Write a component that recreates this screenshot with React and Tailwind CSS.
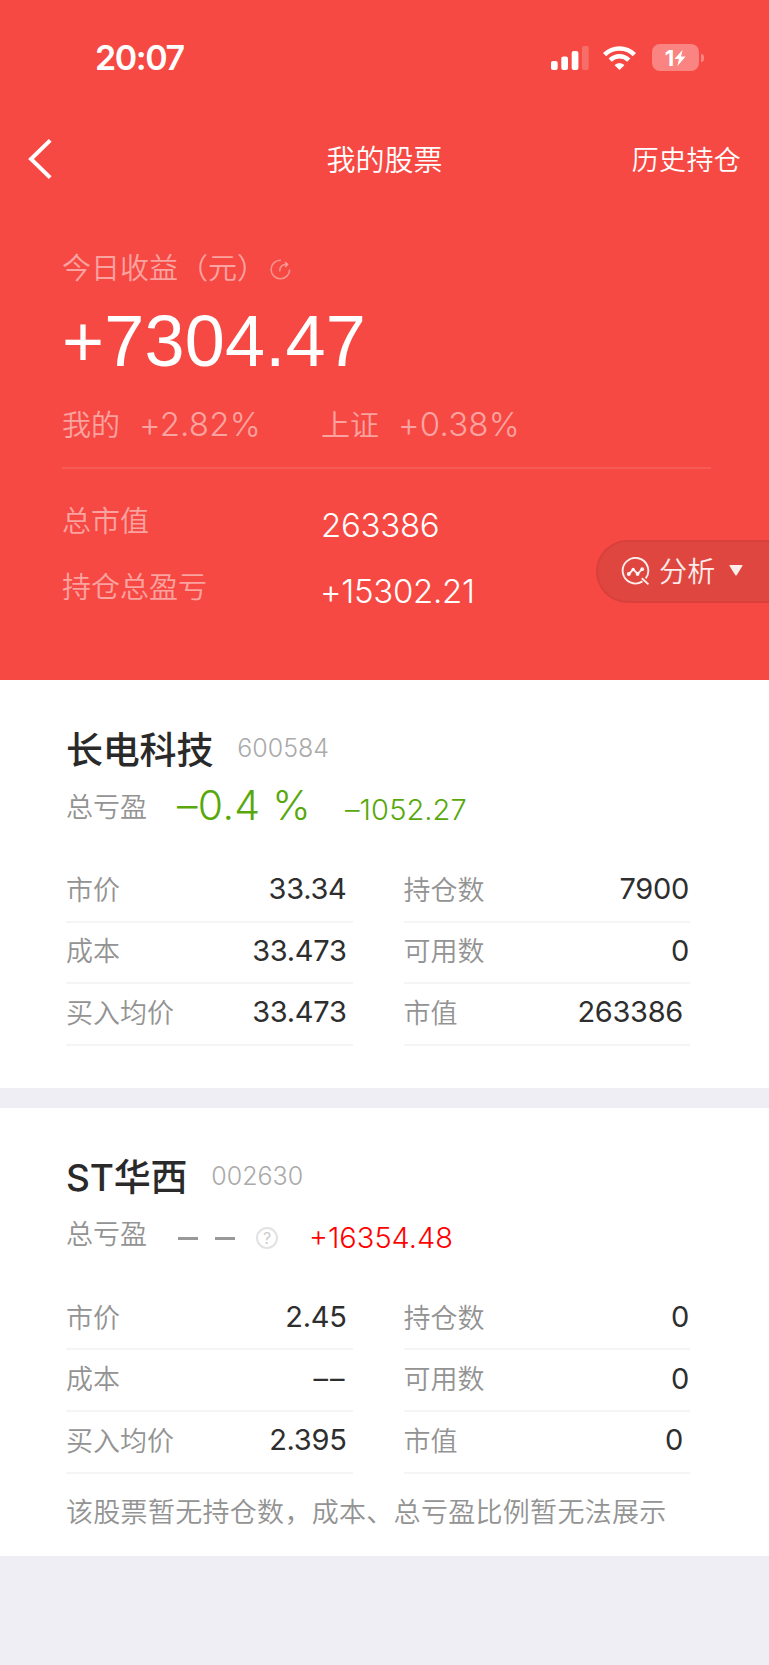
import React from "react";

const stocks = [
  {
    name: "长电科技",
    code: "600584",
    percent: "–0.4 %",
    profit: "–1052.27",
    left: [
      ["市价", "33.34"],
      ["成本", "33.473"],
      ["买入均价", "33.473"],
    ],
    right: [
      ["持仓数", "7900"],
      ["可用数", "0"],
      ["市值", "263386"],
    ],
  },
  {
    name: "ST华西",
    code: "002630",
    percent: null,
    profit: "+16354.48",
    left: [
      ["市价", "2.45"],
      ["成本", "––"],
      ["买入均价", "2.395"],
    ],
    right: [
      ["持仓数", "0"],
      ["可用数", "0"],
      ["市值", "0"],
    ],
    note: "该股票暂无持仓数，成本、总亏盈比例暂无法展示",
  },
];

const StatusBar = () => (
  <div className="flex h-[115px] items-center pl-[95px] pr-[65px]">
    <span className="text-[34px] font-semibold tracking-[-1.4px]">20:07</span>
    <div className="ml-auto flex items-center">
      <svg width="38" height="24" viewBox="0 0 38 24" fill="#fff">
        <rect x="0" y="15" width="6.7" height="9" rx="2" />
        <rect x="10.3" y="10.5" width="6.7" height="13.5" rx="2" />
        <rect x="20.7" y="5" width="6.7" height="19" rx="2" />
        <rect x="31" y="0" width="6.7" height="24" rx="2" opacity="0.2" />
      </svg>
      <svg className="ml-[14px]" width="33" height="24" viewBox="0 0 33 24" fill="none" stroke="#fff">
        <path d="M1.6 8.6 C10 0.4 23 0.4 31.4 8.6" strokeWidth="4.6" />
        <path d="M7.2 14.2 C12.6 9 20.4 9 25.8 14.2" strokeWidth="4.6" />
        <path d="M16.5 24 L11.6 19.2 C14.3 16.6 18.7 16.6 21.4 19.2 Z" fill="#fff" stroke="none" />
      </svg>
      <div className="ml-[16px] flex h-[27px] w-[47px] items-center justify-center rounded-[8px] bg-[#fa8481]">
        <span className="text-[22px] leading-none font-bold">1</span>
        <svg width="12" height="16" viewBox="0 0 12 16" fill="#fff">
          <path d="M8.6 0 L0.4 9 H5 L3.4 16 L11.6 6.6 H7 Z" />
        </svg>
      </div>
      <div className="ml-[2px] h-[8px] w-[3px] rounded-r-full bg-[#fa8481]" />
    </div>
  </div>
);

const NavBar = () => (
  <div className="grid h-[89px] grid-cols-3 items-center pl-[28px] pr-[28px] font-[350]">
    <svg className="mb-px" width="24" height="40" viewBox="0 0 24 40" fill="none" stroke="#fff" strokeWidth="4">
      <path d="M22.2 1.4 L3 20 L22.2 38.6" />
    </svg>
    <h1 className="pt-px text-center text-[29px] leading-none">我的股票</h1>
    <span className="pt-px text-right text-[27px] leading-none tracking-[0.3px]">历史持仓</span>
  </div>
);

const Summary = () => (
  <div className="pl-[62px] pr-[58px] font-[350]">
    <div className="mt-[49px] flex h-[30px] items-center text-white/50">
      <span className="text-[29px] leading-none">今日收益</span>
      <span className="ml-px text-[29px] leading-none">（元）</span>
      <svg className="ml-[4px] mt-[3px]" width="21" height="21" viewBox="0 0 21 21" fill="none" stroke="currentColor" strokeOpacity="0.8" strokeWidth="1.6">
        <path d="M10.8 1.2 A9.3 9.3 0 1 0 19.7 10.5" />
        <path d="M9.8 12.4 C9.6 7.6 12 5.4 16.6 5.4" />
        <path d="M15 3.2 L17.6 5.4 L15.2 8" />
      </svg>
    </div>
    <div className="mt-[22px] h-[72px] font-['Liberation_Sans'] text-[72px] leading-[72px] font-normal tracking-[0.2px]">
      +7304.47
    </div>
    <div className="mt-[31px] flex h-[34px] items-center font-[320] text-white/50">
      <div className="flex w-[259px] items-center">
        <span className="w-[77px] text-[29px] leading-none font-[350]">我的</span>
        <span className="mb-px text-[33px] leading-none tracking-[0.2px]">+2.82%</span>
      </div>
      <span className="w-[77px] text-[29px] leading-none font-[350]">上证</span>
      <span className="mb-px text-[33px] leading-none tracking-[0.2px]">+0.38%</span>
    </div>
    <div className="mt-[25px] h-[2px] bg-white/10" />
    <div className="mt-[35px] flex h-[40px]">
      <span className="w-[259px] pt-[3px] text-[29px] leading-none text-white/50">总市值</span>
      <span className="pt-[5px] text-[33px] leading-none tracking-[-0.3px]">263386</span>
    </div>
    <div className="mt-[26px] flex h-[40px]">
      <span className="w-[258px] pt-[3px] text-[29px] leading-none text-white/50">持仓总盈亏</span>
      <span className="pt-[5px] text-[33px] leading-none tracking-[-0.3px]">+15302.21</span>
    </div>
  </div>
);

const AnalysisButton = () => (
  <button className="absolute top-[540px] right-0 flex h-[63px] w-[173px] items-center rounded-l-full border-2 border-r-0 border-[#d8403b] bg-[#df463f] pl-[23px] font-[350] text-white/90">
    <svg width="29" height="29" viewBox="0 0 29 29" fill="none" stroke="currentColor" strokeWidth="1.9">
      <path d="M21.5 24.4 A12.8 12.8 0 1 1 24.7 21.4 M20.8 21.2 L27.4 27.4" />
      <path d="M8 17 L12.2 12.4 L16.6 17 L21 12.4" />
      <g fill="currentColor" stroke="none">
        <circle cx="7.8" cy="17" r="2" />
        <circle cx="12.2" cy="12.4" r="1.7" />
        <circle cx="16.6" cy="17" r="1.9" />
        <circle cx="21.2" cy="12.2" r="1.9" />
      </g>
    </svg>
    <span className="ml-[9px] text-[28px] leading-none tracking-[0.3px]">分析</span>
    <svg className="ml-[13px] mb-[2px]" width="14" height="11" viewBox="0 0 14 11" fill="currentColor">
      <path d="M1 0 H13 Q14 0 13.4 1 L7.8 10 Q7 11 6.2 10 L0.6 1 Q0 0 1 0 Z" />
    </svg>
  </button>
);

const StatColumn = ({ rows, valueClass }) => (
  <div>
    {rows.map(([label, value]) => (
      <div
        key={label}
        className="flex h-[61.6px] items-center justify-between border-b-2 border-[#f5f5f5]"
      >
        <span className="pb-px text-[27px] leading-none font-[350] text-[#939393]">{label}</span>
        <span
          className={`pb-[4px] text-[29px] leading-none font-normal text-[#2e2e2e] ${
            value === "––" ? "tracking-[2px]" : "tracking-[-0.3px]"
          } ${label === "市值" ? "pr-[7px]" : valueClass}`}
        >
          {value}
        </span>
      </div>
    ))}
  </div>
);

const StockCard = ({ stock }) => (
  <section className="bg-white pl-[66px] pr-[79px] pt-[50px] pb-[42px]">
    <div className="flex h-[40px] items-center">
      <h2 className="text-[37px] leading-none font-medium tracking-[-0.2px] text-[#2a2a2a]">{stock.name}</h2>
      <span className="ml-[24px] mb-[3px] text-[25px] leading-none font-light text-[#aaa]">{stock.code}</span>
    </div>
    <div className="mt-[14px] flex h-[46px] items-center">
      <span className="w-[111px] text-[27px] leading-none font-[350] text-[#939393]">总亏盈</span>
      {stock.percent ? (
        <>
          <span className="mb-[4px] w-[168px] text-[41px] leading-none font-[350] tracking-[0.3px] text-[#58a80c]">
            {stock.percent}
          </span>
          <span className="mt-[4px] text-[29px] leading-none font-[350] tracking-[0.1px] text-[#58a80c]">
            {stock.profit}
          </span>
        </>
      ) : (
        <>
          <div className="mt-[7px] ml-px flex gap-[17px]">
            <i className="h-[3px] w-[20px] bg-[#999]" />
            <i className="h-[3px] w-[20px] bg-[#999]" />
          </div>
          <div className="ml-[21px] mt-[6px] flex size-[22px] items-center justify-center rounded-full border-2 border-[#e2e2e2] text-[16px] leading-none text-[#ccc]">
            ?
          </div>
          <span className="ml-[31px] mt-[5px] text-[29px] leading-none font-[350] text-[#f00]">{stock.profit}</span>
        </>
      )}
    </div>
    <div className="mt-[31px] grid grid-cols-2 gap-[51px]">
      <StatColumn rows={stock.left} valueClass="pr-[6px]" />
      <StatColumn rows={stock.right} valueClass="pr-px" />
    </div>
    {stock.note && (
      <p className="mt-[24px] mb-[-14px] text-[27px] leading-[30px] font-[350] tracking-[0.3px] whitespace-nowrap text-[#939393]">
        {stock.note}
      </p>
    )}
  </section>
);

export default function App() {
  return (
    <div
      lang="zh-CN"
      className="min-h-[1665px] w-[769px] bg-[#efeef4] font-['Inter','Noto_Sans_CJK_SC',sans-serif]"
    >
      <header className="relative h-[680px] bg-[#f64943] text-white">
        <StatusBar />
        <NavBar />
        <Summary />
        <AnalysisButton />
      </header>
      <main className="flex flex-col gap-5">
        {stocks.map((stock) => (
          <StockCard key={stock.code} stock={stock} />
        ))}
      </main>
    </div>
  );
}
